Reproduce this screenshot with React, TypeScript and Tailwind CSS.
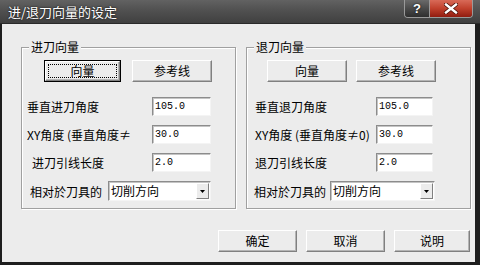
import React from "react";

const cjk = "font-['Noto_Sans_CJK_SC','Noto_Sans',sans-serif]";
const mono = "font-['Liberation_Mono','DejaVu_Sans_Mono',monospace]";

function RaisedButton({ label, width, isDefault = false }: { label: string; width: number; isDefault?: boolean }) {
    if (isDefault) {
        return (
            <div className="h-[22px] border border-black bg-[#ececec] flex" style={{ width }}>
                <div className="flex-1 border border-t-white border-l-white border-r-[#808080] border-b-[#808080] shadow-[inset_-1px_-1px_0_#b4b4b4] p-[2px] flex">
                    <div className="flex-1 border border-dotted border-black flex items-center justify-center leading-[14px]">
                        {label}
                    </div>
                </div>
            </div>
        );
    }
    return (
        <div
            className="h-[22px] bg-[#ececec] border border-t-white border-l-white border-r-[#808080] border-b-[#808080] shadow-[inset_-1px_-1px_0_#b4b4b4] flex items-center justify-center leading-[16px]"
            style={{ width }}
        >
            {label}
        </div>
    );
}

function TextField({ value, width }: { value: string; width: number }) {
    return (
        <div
            className={`h-[19px] bg-white border border-t-[#8c8c8c] border-l-[#8c8c8c] border-r-[#f4f4f4] border-b-[#f4f4f4] shadow-[inset_1px_1px_0_#c4c4c4] flex items-center pl-[2px] text-[10px] leading-[14px] ${mono}`}
            style={{ width }}
        >
            {value}
        </div>
    );
}

function ComboBox({ value, width }: { value: string; width: number }) {
    return (
        <div
            className="h-[20px] bg-white border border-t-[#8c8c8c] border-l-[#8c8c8c] border-r-[#f4f4f4] border-b-[#f4f4f4] shadow-[inset_1px_1px_0_#c4c4c4] flex items-center pl-[2px] pr-[1px]"
            style={{ width }}
        >
            <span className="flex-1 leading-[16px]">{value}</span>
            <div className="w-[13px] h-[16px] bg-[#ececec] border border-t-white border-l-white border-r-[#808080] border-b-[#808080] flex items-center justify-center">
                <svg width="5" height="3" viewBox="0 0 5 3">
                    <path d="M0 0h5L2.5 3z" fill="#000" />
                </svg>
            </div>
        </div>
    );
}

type Row = { label: string; ml: number; labelW: number; value?: string; fieldW: number; combo?: boolean };

function GroupBox({
    title,
    width,
    btnOffset,
    btnGap,
    btnWidths,
    focused,
    rows,
}: {
    title: string;
    width: number;
    btnOffset: number;
    btnGap: number;
    btnWidths: [number, number];
    focused?: boolean;
    rows: Row[];
}) {
    return (
        <div
            className="relative h-[162px] border border-[#a0a0a0] shadow-[inset_1px_1px_0_#fff,1px_1px_0_#fff] pt-[12px] flex flex-col"
            style={{ width }}
        >
            <span className="absolute left-[7px] top-[-9px] px-[2px] bg-[#ececec] leading-[16px]">{title}</span>
            <div className="flex" style={{ marginLeft: btnOffset, gap: btnGap }}>
                <RaisedButton label="向量" width={btnWidths[0]} isDefault={focused} />
                <RaisedButton label="参考线" width={btnWidths[1]} />
            </div>
            <div className="mt-[15px] flex flex-col gap-[9px]">
                {rows.map((r) => (
                    <div key={r.label} className="flex items-center" style={{ marginLeft: r.ml }}>
                        <span className="whitespace-nowrap leading-[17px]" style={{ width: r.labelW }}>
                            {r.label}
                        </span>
                        {r.combo ? (
                            <ComboBox value={r.value ?? ""} width={r.fieldW} />
                        ) : (
                            <TextField value={r.value ?? ""} width={r.fieldW} />
                        )}
                    </div>
                ))}
            </div>
        </div>
    );
}

export default function App() {
    return (
        <div className={`w-[480px] h-[265px] bg-[#1e1e1e] flex flex-col overflow-hidden text-[12px] text-black ${cjk}`}>
            {/* title bar */}
            <div className="h-[24px] flex items-start justify-between bg-[linear-gradient(180deg,#626262_0%,#525252_40%,#404040_100%)] border-b border-[#2a2a2a]">
                <span className="pl-[8px] pt-[3px] text-[13px] leading-[17px] text-white [text-shadow:0_0_2px_#000]">
                    进/退刀向量的设定
                </span>
                <div className="flex mr-[7px] h-[18px] border border-t-0 border-[#9a9a9a] rounded-b-[4px] overflow-hidden">
                    <div className="w-[25px] bg-[linear-gradient(180deg,#6a6a6a_0%,#4a4a4a_50%,#2e2e2e_100%)] border-r border-[#9a9a9a] flex items-center justify-center text-white font-bold text-[13px] font-['Liberation_Sans',sans-serif] [text-shadow:0_0_2px_#000]">
                        ?
                    </div>
                    <div className="w-[42px] bg-[linear-gradient(180deg,#d86a58_0%,#c0402c_50%,#901c10_100%)] flex items-center justify-center">
                        <svg width="14" height="11" viewBox="0 0 14 11">
                            <path d="M2 1.5l10 8M12 1.5l-10 8" stroke="#4a1008" strokeWidth="4" strokeLinecap="square" />
                            <path d="M2 1.5l10 8M12 1.5l-10 8" stroke="#fff" strokeWidth="2.4" strokeLinecap="square" />
                        </svg>
                    </div>
                </div>
            </div>

            {/* client area */}
            <div className="flex-1 ml-[2px] mr-[5px] mb-[3px] bg-[#ececec] flex flex-col pt-[23px]">
                <div className="flex pl-[19px] gap-[10px]">
                    <GroupBox
                        title="进刀向量"
                        width={215}
                        btnOffset={22}
                        btnGap={11}
                        btnWidths={[77, 80]}
                        focused
                        rows={[
                            { label: "垂直进刀角度", ml: 5, labelW: 125, value: "105.0", fieldW: 59 },
                            { label: "XY角度 (垂直角度≠", ml: 5, labelW: 125, value: "30.0", fieldW: 59 },
                            { label: "进刀引线长度", ml: 10, labelW: 120, value: "2.0", fieldW: 59 },
                            { label: "相对於刀具的", ml: 8, labelW: 78, value: "切削方向", fieldW: 103, combo: true },
                        ]}
                    />
                    <GroupBox
                        title="退刀向量"
                        width={225}
                        btnOffset={20}
                        btnGap={9}
                        btnWidths={[80, 80]}
                        rows={[
                            { label: "垂直退刀角度", ml: 8, labelW: 121, value: "105.0", fieldW: 57 },
                            { label: "XY角度 (垂直角度≠0)", ml: 8, labelW: 121, value: "30.0", fieldW: 57 },
                            { label: "退刀引线长度", ml: 8, labelW: 121, value: "2.0", fieldW: 57 },
                            { label: "相对於刀具的", ml: 7, labelW: 76, value: "切削方向", fieldW: 105, combo: true },
                        ]}
                    />
                </div>
                <div className="mt-[21px] flex pl-[216px] gap-[9px]">
                    <RaisedButton label="确定" width={79} />
                    <RaisedButton label="取消" width={79} />
                    <RaisedButton label="说明" width={76} />
                </div>
            </div>
        </div>
    );
}
